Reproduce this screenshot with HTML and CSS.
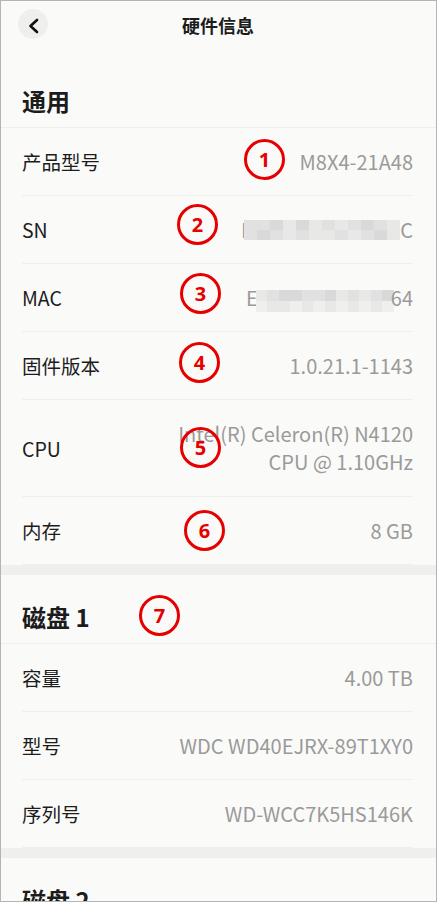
FILE: index.html
```html
<!DOCTYPE html>
<html lang="zh-CN">
<head>
    <meta charset="UTF-8">
    <meta name="viewport" content="width=device-width, initial-scale=1.0">
    <title>硬件信息</title>
    <link rel="stylesheet" href="styles.css">
</head>
<body>
    <div class="screen">
        <header class="topbar">
            <button class="back" type="button" aria-label="返回">
                <svg width="30" height="30" viewBox="0 0 30 30">
                    <path d="M19 11 L12.5 17 L19 23" fill="none" stroke="#111" stroke-width="2.6" stroke-linecap="round" stroke-linejoin="round"/>
                </svg>
            </button>
            <h1 class="title">硬件信息</h1>
            <span class="spacer"></span>
        </header>

        <!-- 通用 -->
        <section class="group">
            <h2 class="group-title">通用</h2>
            <ul class="rows">
                <li class="row"><span class="label">产品型号</span><span class="value">M8X4-21A48</span></li>
                <li class="row">
                    <span class="label">SN</span>
                    <span class="value masked">
                        <span>M</span>
                        <span class="mosaic sn">
                            <i class="s2"></i><i class="s2"></i><i class="s1"></i><i class="s3"></i><i class="s1"></i><i class="s3"></i><i class="s2"></i><i class="s3"></i><i class="s2"></i><i class="s1"></i><i class="s2"></i><i class="s3"></i>
                            <i class="s2"></i><i class="s1"></i><i class="s2"></i><i class="s3"></i><i class="s2"></i><i class="s3"></i><i class="s3"></i><i class="s2"></i><i class="s3"></i><i class="s2"></i><i class="s1"></i><i class="s3"></i>
                        </span>
                        <span>C</span>
                    </span>
                </li>
                <li class="row">
                    <span class="label">MAC</span>
                    <span class="value masked">
                        <span>E</span>
                        <span class="mosaic mac">
                            <i class="s3"></i><i class="s2"></i><i class="s1"></i><i class="s1"></i><i class="s2"></i><i class="s2"></i><i class="s1"></i><i class="s3"></i><i class="s2"></i><i class="s3"></i><i class="s2"></i><i class="s1"></i>
                            <i class="s4"></i><i class="s3"></i><i class="s3"></i><i class="s4"></i><i class="s3"></i><i class="s4"></i><i class="s3"></i><i class="s4"></i><i class="s3"></i><i class="s4"></i><i class="s3"></i><i class="s4"></i>
                        </span>
                        <span>64</span>
                    </span>
                </li>
                <li class="row"><span class="label">固件版本</span><span class="value">1.0.21.1-1143</span></li>
                <li class="row tall"><span class="label">CPU</span><span class="value">Intel(R) Celeron(R) N4120<br>CPU @ 1.10GHz</span></li>
                <li class="row"><span class="label">内存</span><span class="value">8 GB</span></li>
            </ul>
        </section>

        <div class="gap"></div>

        <!-- 磁盘 1 -->
        <section class="group">
            <h2 class="group-title">磁盘 1</h2>
            <ul class="rows">
                <li class="row"><span class="label">容量</span><span class="value">4.00 TB</span></li>
                <li class="row"><span class="label">型号</span><span class="value">WDC WD40EJRX-89T1XY0</span></li>
                <li class="row"><span class="label">序列号</span><span class="value">WD-WCC7K5HS146K</span></li>
            </ul>
        </section>

        <div class="gap"></div>

        <section class="group">
            <h2 class="group-title">磁盘 2</h2>
        </section>

        <!-- annotation marks -->
        <span class="mark mark-1">1</span>
        <span class="mark mark-2">2</span>
        <span class="mark mark-3">3</span>
        <span class="mark mark-4">4</span>
        <span class="mark mark-5">5</span>
        <span class="mark mark-6">6</span>
        <span class="mark mark-7">7</span>
    </div>
</body>
</html>
```

FILE: styles.css
```css
body {
    margin: 0;
    background-color: #fafaf8;
    font-family: "Noto Sans CJK SC", "Noto Sans", sans-serif;
    color: #1c1c1c;
}

.screen {
    position: relative;
    width: 437px;
    height: 902px;
    box-sizing: border-box;
    border: 1px solid #b4b4b4;
    background-color: #fafaf8;
    overflow: hidden;
}

/* top bar */
.topbar {
    display: grid;
    grid-template-columns: 30px 1fr 30px;
    align-items: center;
    height: 58px;
    box-sizing: border-box;
    padding: 8px 18px 20px 17px;
}

.back {
    width: 30px;
    height: 30px;
    padding: 0;
    border: none;
    border-radius: 50%;
    background-color: #efefed;
    display: flex;
}

.title {
    margin: 0;
    text-align: center;
    font-size: 18px;
    font-weight: bold;
    line-height: 30px;
    position: relative;
    top: 1px;
}

/* groups */
.group-title {
    margin: 0;
    height: 69px;
    box-sizing: border-box;
    display: flex;
    align-items: flex-end;
    padding: 0 21px 11px;
    font-size: 24px;
    font-weight: bold;
    line-height: 30px;
    border-bottom: 1px solid #efefed;
}

.rows {
    list-style: none;
    margin: 0;
    padding: 0;
}

.row {
    display: flex;
    justify-content: space-between;
    align-items: center;
    height: 67px;
    margin: 0 23px 0 21px;
    border-bottom: 1px solid #efefed;
}

.row.tall {
    height: 96px;
}

.label {
    color: #1c1c1c;
    font-size: 19.5px;
}

.value {
    color: #9a9a9a;
    font-size: 20px;
    text-align: right;
    line-height: 28px;
}

/* blurred values */
.masked {
    display: flex;
    align-items: center;
}

.mosaic {
    display: grid;
    grid-template-columns: repeat(12, 13px);
    grid-auto-rows: 10px;
}

.mosaic.sn {
    margin: 0 0 0 -13px;
}

.mosaic.mac {
    grid-template-columns: repeat(12, 11.5px);
    grid-auto-rows: 11px;
    margin: 6px -3px 0 -2px;
}

.mosaic i { display: block; }
.mosaic .s1 { background-color: #d9d9d9; }
.mosaic .s2 { background-color: #e1e1e1; }
.mosaic .s3 { background-color: #e8e8e7; }
.mosaic .s4 { background-color: #efefee; }

.gap {
    height: 10px;
    background-color: #efefed;
}

/* red annotation circles */
.mark {
    position: absolute;
    width: 41px;
    height: 41px;
    box-sizing: border-box;
    border: 3px solid #e60000;
    border-radius: 50%;
    display: flex;
    align-items: center;
    justify-content: center;
    color: #e60000;
    font-family: "Noto Sans", sans-serif;
    font-size: 20px;
    font-weight: bold;
}

.mark-1 { left: 243px; top: 138px; }
.mark-2 { left: 176px; top: 203px; }
.mark-3 { left: 179px; top: 272px; }
.mark-4 { left: 178px; top: 341px; }
.mark-5 { left: 179px; top: 426px; }
.mark-6 { left: 183px; top: 509px; }
.mark-7 { left: 138px; top: 594px; }
```
